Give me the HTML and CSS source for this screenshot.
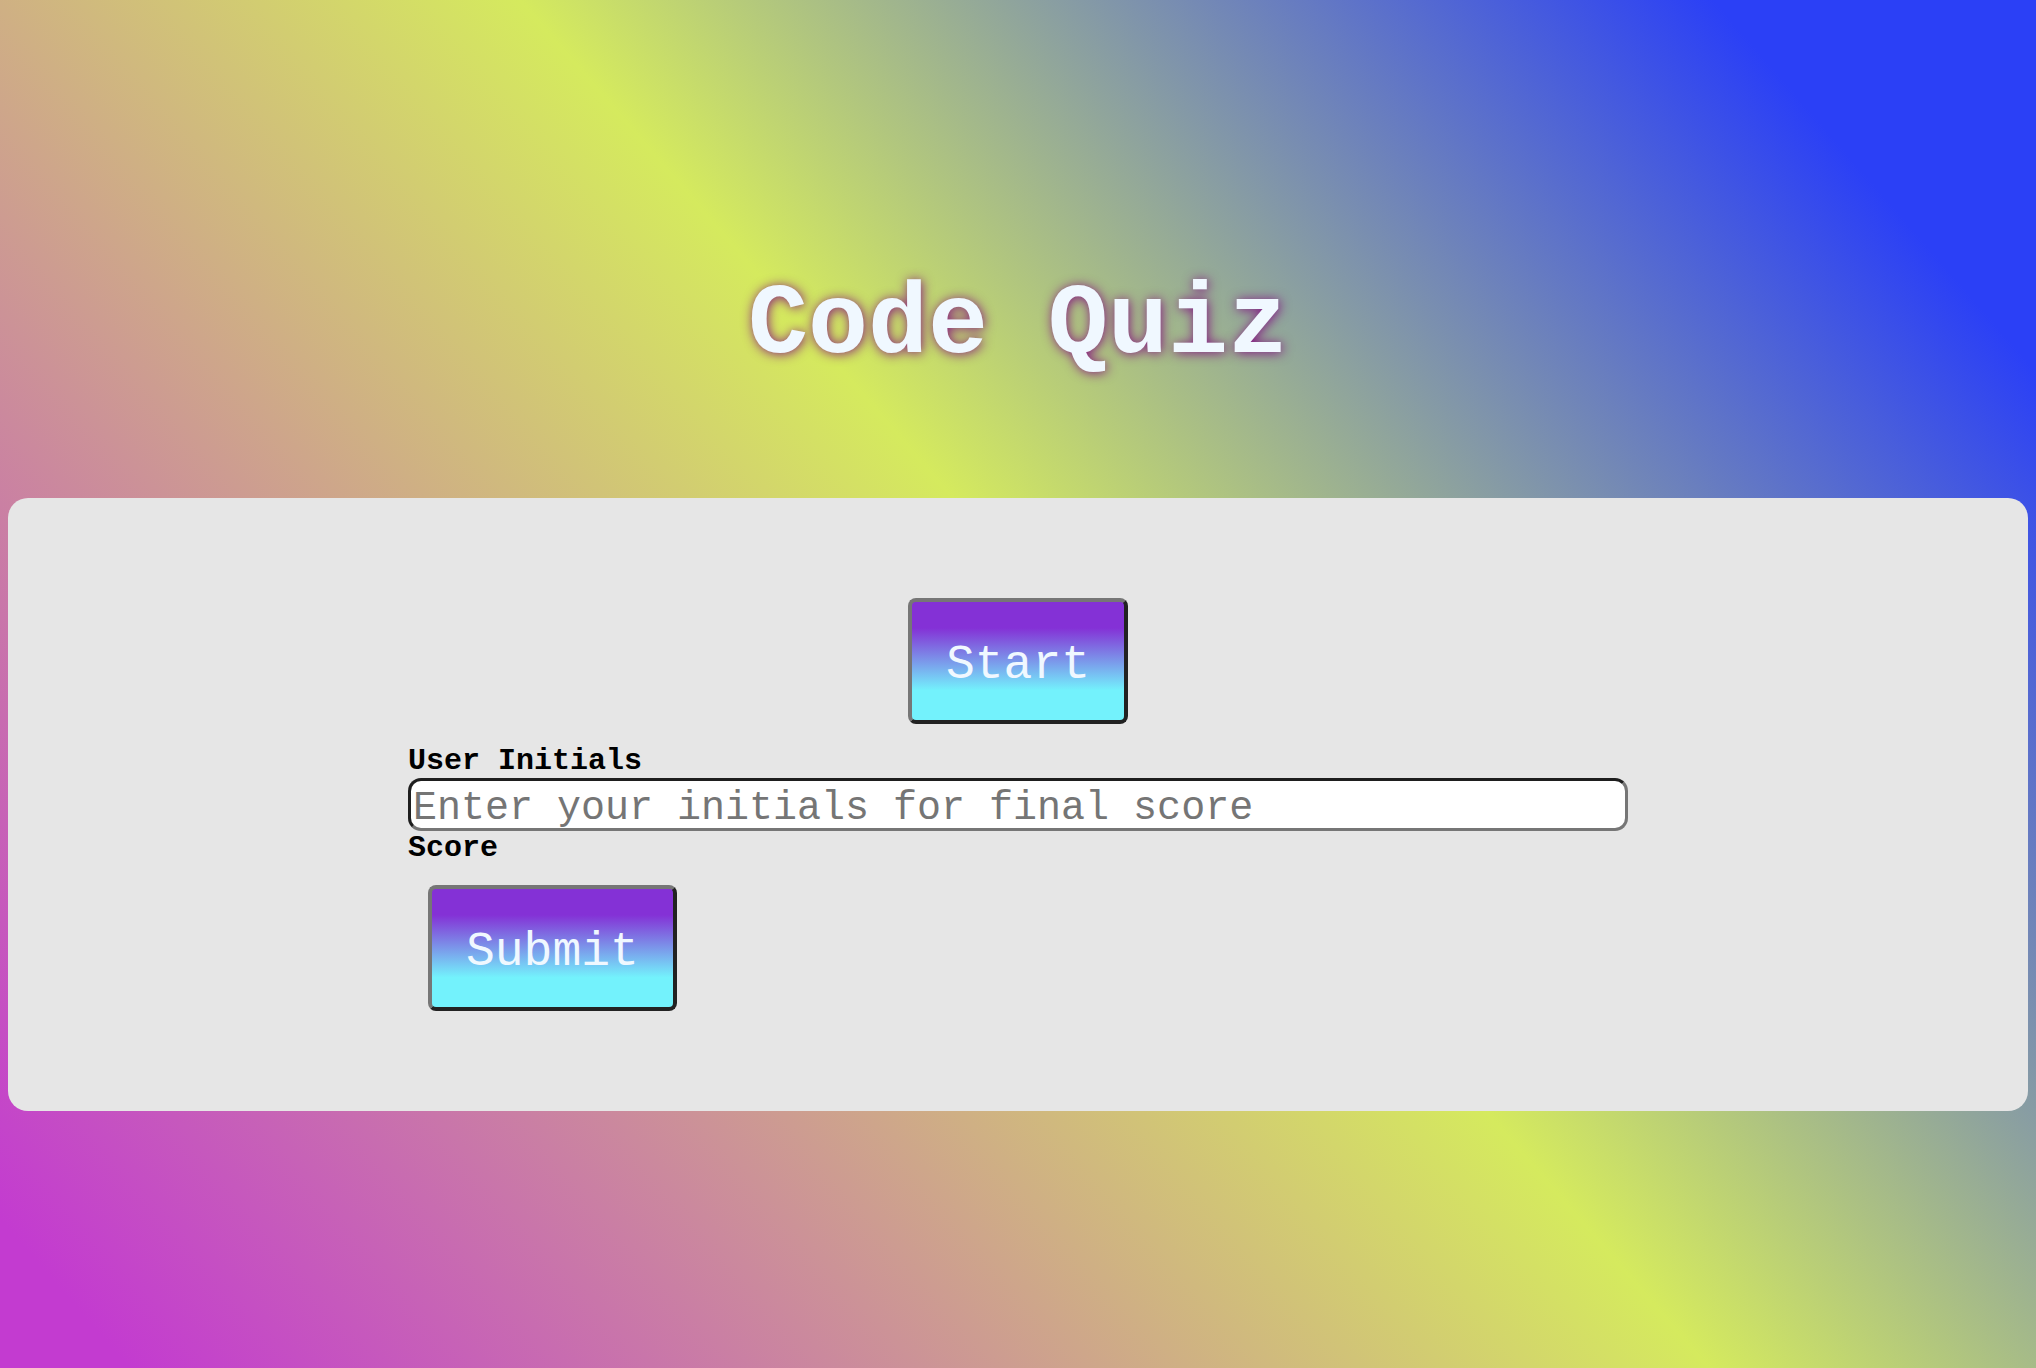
FILE: index.html
```html
<!DOCTYPE html>
<html lang="en">
<head>
<meta charset="utf-8">
<title>Code Quiz</title>
<link rel="stylesheet" href="styles.css">
</head>
<body>
  <header class="header">
    <h1 class="title">Code Quiz</h1>
  </header>
  <main class="card">
    <div class="start-row">
      <button class="btn" type="button">Start</button>
    </div>
    <form class="score-form">
      <label class="label" for="initials">User Initials</label>
      <input class="input" id="initials" type="text" placeholder="Enter your initials for final score">
      <label class="label">Score</label>
      <button class="btn btn-submit" type="button">Submit</button>
    </form>
  </main>
</body>
</html>
```
FILE: styles.css
```css
html {
  min-height: 100%;
  background: linear-gradient(49deg, #c33bd0 4%, #d5ea5e 53%, #2b40f6 90%);
}

body {
  margin: 8px;
  font-family: "Liberation Mono", "Courier New", monospace;
}

.header {
  padding: 261px 0 116px;
}

.title {
  margin: 0;
  text-align: center;
  font-family: "Liberation Mono", "Courier New", monospace;
  font-weight: 700;
  font-size: 100px;
  line-height: normal;
  color: #f0f8ff;
  text-shadow: 1px 1px 12px rgba(128, 0, 128, 0.9);
}

.card {
  display: block;
  background: #e6e6e6;
  border-radius: 20px;
  padding: 80px 0;
}

.start-row {
  display: flex;
  justify-content: center;
}

.btn {
  display: block;
  margin: 20px;
  padding: 36px 34px 28px;
  font-family: "Liberation Mono", "Courier New", monospace;
  font-size: 48px;
  line-height: normal;
  color: #f0f8ff;
  background: linear-gradient(to bottom, #8431d6 22%, #73f2fc 75%);
  border: 4px solid;
  border-color: #767676 #222222 #222222 #767676;
  border-radius: 8px;
  cursor: pointer;
}

.score-form {
  width: 1220px;
  margin: 0 auto;
}

.label {
  display: block;
  font-family: "Liberation Mono", "Courier New", monospace;
  font-weight: 700;
  font-size: 30px;
  line-height: normal;
  color: #000;
}

.input {
  display: block;
  box-sizing: border-box;
  width: 100%;
  height: 53px;
  margin: 0;
  padding: 7px 2px 0;
  font-family: "Liberation Mono", "Courier New", monospace;
  font-size: 40px;
  line-height: 40px;
  background: #fff;
  border: 3px solid;
  border-color: #1e1e1e #767676 #767676 #1e1e1e;
  border-radius: 13px;
}

.input::placeholder {
  color: #757575;
}
```
